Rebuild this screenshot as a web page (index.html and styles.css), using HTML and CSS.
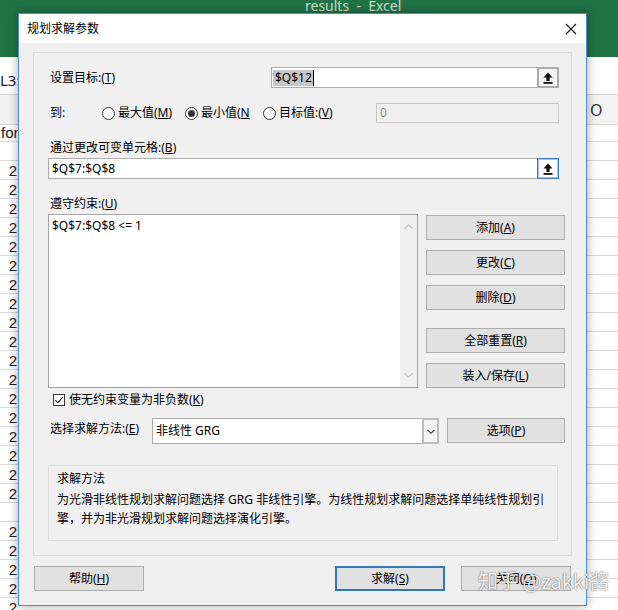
FILE: index.html
```html
<!DOCTYPE html>
<html lang="zh-CN">
<head>
<meta charset="utf-8">
<title>规划求解参数</title>
<link rel="stylesheet" href="styles.css">
</head>
<body>
<div class="excel">
  <div class="ribbon"><span class="app-title">results&nbsp; - &nbsp;Excel</span></div>
  <div class="fbar"><span class="namebox">L3:L12</span></div>
  <div class="colhdr"><span class="col-o">O</span></div>
  <div class="sheet">
    <div class="row r-first"><span class="cell cell-left">for</span></div>
    <div class="row"></div>
    <div class="row"><span class="cell">2</span></div>
    <div class="row"><span class="cell">2</span></div>
    <div class="row"><span class="cell">2</span></div>
    <div class="row"><span class="cell">2</span></div>
    <div class="row"><span class="cell">2</span></div>
    <div class="row"><span class="cell">2</span></div>
    <div class="row"><span class="cell">2</span></div>
    <div class="row"><span class="cell">2</span></div>
    <div class="row"><span class="cell">2</span></div>
    <div class="row"><span class="cell">2</span></div>
    <div class="row"><span class="cell">2</span></div>
    <div class="row"><span class="cell">2</span></div>
    <div class="row"><span class="cell">2</span></div>
    <div class="row"><span class="cell">2</span></div>
    <div class="row"><span class="cell">2</span></div>
    <div class="row"><span class="cell">2</span></div>
    <div class="row"><span class="cell">2</span></div>
    <div class="row"><span class="cell">2</span></div>
    <div class="row"></div>
    <div class="row"><span class="cell">2</span></div>
    <div class="row"><span class="cell">2</span></div>
    <div class="row"><span class="cell">2</span></div>
    <div class="row"><span class="cell">2</span></div>
    <div class="row"><span class="cell">2</span></div>
  </div>
</div>

<div class="dialog">
  <div class="titlebar">
    <span class="title">规划求解参数</span>
    <span class="close">
      <svg width="12" height="12" viewBox="0 0 12 12"><path d="M1 1 L11 11 M11 1 L1 11" stroke="#111" stroke-width="1.1" fill="none"/></svg>
    </span>
  </div>

  <div class="panel">
    <div class="row-target">
      <span class="lbl lbl-target">设置目标:(<u>T</u>)</span>
      <div class="refbox refbox-target">
        <span class="reftext reftext-target"><span class="sel">$Q$12</span><span class="caret"></span></span>
        <span class="refbtn refbtn-gray">
          <svg width="10" height="12" viewBox="0 0 10 12"><path d="M5 0.5 L9.5 5.5 H6.6 V9 H3.4 V5.5 H0.5 Z" fill="#111"/><rect x="0.5" y="10" width="9" height="1.8" fill="#111"/></svg>
        </span>
      </div>
    </div>

    <div class="row-to">
      <span class="lbl lbl-to">到:</span>
      <span class="radio r1"><span class="dot"></span>最大值(<u>M</u>)</span>
      <span class="radio r2 checked"><span class="dot"></span>最小值(<u>N</u></span>
      <span class="radio r3"><span class="dot"></span>目标值:(<u>V</u>)</span>
      <div class="valbox">0</div>
    </div>

    <div class="lbl lbl-block lbl-change">通过更改可变单元格:(<u>B</u>)</div>
    <div class="refbox refbox-wide">
      <span class="reftext">$Q$7:$Q$8</span>
      <span class="refbtn refbtn-blue">
        <svg width="10" height="12" viewBox="0 0 10 12"><path d="M5 0.5 L9.5 5.5 H6.6 V9 H3.4 V5.5 H0.5 Z" fill="#111"/><rect x="0.5" y="10" width="9" height="1.8" fill="#111"/></svg>
      </span>
    </div>

    <div class="lbl lbl-block lbl-cons">遵守约束:(<u>U</u>)</div>
    <div class="cons-row">
      <div class="listbox">
        <div class="list-items"><div class="item">$Q$7:$Q$8 &lt;= 1</div></div>
        <div class="vscroll">
          <svg width="9" height="5" viewBox="0 0 9 5"><path d="M0.5 4.5 L4.5 0.8 L8.5 4.5" stroke="#c4c4c4" stroke-width="1.2" fill="none"/></svg>
          <svg width="9" height="5" viewBox="0 0 9 5"><path d="M0.5 0.5 L4.5 4.2 L8.5 0.5" stroke="#c4c4c4" stroke-width="1.2" fill="none"/></svg>
        </div>
      </div>
      <div class="side-btns">
        <button class="btn sb sb-add">添加(<u>A</u>)</button>
        <button class="btn sb sb-mid">更改(<u>C</u>)</button>
        <button class="btn sb sb-mid">删除(<u>D</u>)</button>
        <button class="btn sb sb-reset">全部重置(<u>R</u>)</button>
        <button class="btn sb sb-mid">装入/保存(<u>L</u>)</button>
      </div>
    </div>

    <div class="check-row">
      <span class="checkbox">
        <svg width="12" height="12" viewBox="0 0 12 12"><rect x="0.5" y="0.5" width="11" height="11" fill="#fff" stroke="#333"/><path d="M2.3 6.2 L4.8 8.7 L9.8 3.2" stroke="#222" stroke-width="1.2" fill="none"/></svg>
      </span>
      <span>使无约束变量为非负数(<u>K</u>)</span>
    </div>

    <div class="method-row">
      <span class="lbl lbl-method">选择求解方法:(<u>E</u>)</span>
      <div class="combo">
        <span class="combo-text">非线性 GRG</span>
        <span class="combo-arrow">
          <svg width="8" height="5" viewBox="0 0 8 5"><path d="M0.5 0.8 L4 4.2 L7.5 0.8" stroke="#444" stroke-width="1.1" fill="none"/></svg>
        </span>
      </div>
      <button class="btn btn-opt">选项(<u>P</u>)</button>
    </div>

    <div class="desc">
      <div class="desc-title">求解方法</div>
      <div class="desc-text">为光滑非线性规划求解问题选择 GRG 非线性引擎。为线性规划求解问题选择单纯线性规划引<br>擎，并为非光滑规划求解问题选择演化引擎。</div>
    </div>
  </div>

  <div class="footer">
    <button class="btn fbtn">帮助(<u>H</u>)</button>
    <span class="spacer"></span>
    <button class="btn fbtn primary">求解(<u>S</u>)</button>
    <button class="btn fbtn">关闭(<u>O</u>)</button>
  </div>
</div>

<div class="watermark">知乎 @zakki酱</div>
</body>
</html>
```

FILE: styles.css
```css
html, body {
  margin: 0;
  padding: 0;
}
body {
  width: 618px;
  height: 610px;
  overflow: hidden;
  position: relative;
  background: #ffffff;
  font-family: "Noto Sans", "Noto Sans CJK SC", sans-serif;
}

/* ---------- Excel background ---------- */
.ribbon {
  height: 57px;
  background: #217346;
  overflow: hidden;
}
.app-title {
  display: block;
  padding-left: 305px;
  margin-top: -1px;
  color: #cfe2d6;
  font-size: 14px;
  line-height: 14px;
  white-space: nowrap;
}
.fbar {
  height: 37px;
  border-bottom: 1px solid #d4d4d4;
}
.namebox {
  display: block;
  padding-top: 15px;
  font-size: 15px;
  line-height: 16px;
  color: #222;
  white-space: nowrap;
}
.colhdr {
  height: 29px;
  background: #f3f3f3;
  border-bottom: 1px solid #d4d4d4;
}
.col-o {
  display: block;
  padding-left: 590px;
  padding-top: 5px;
  font-size: 16px;
  line-height: 20px;
  color: #333;
}
.row {
  height: 18px;
  border-bottom: 1px solid #dadada;
}
.r-first {
  height: 16px;
}
.cell {
  display: block;
  width: 17px;
  text-align: right;
  font-family: "Liberation Sans", sans-serif;
  font-size: 15px;
  line-height: 19px;
  color: #222;
}
.cell-left {
  text-align: left;
  padding-left: 1px;
  line-height: 15px;
}

/* ---------- Dialog ---------- */
.dialog {
  position: absolute;
  left: 18px;
  top: 13px;
  width: 569px;
  height: 593px;
  box-sizing: border-box;
  border: 1px solid #4f8cc8;
  background: #f0f0f0;
  box-shadow: 0 0 10px rgba(0, 0, 0, 0.35);
  font-size: 12px;
  color: #000;
}
.titlebar {
  height: 29px;
  background: #ffffff;
  display: flex;
  align-items: center;
  padding-left: 8px;
}
.title {
  line-height: 16px;
}
.close {
  margin-left: auto;
  width: 30px;
  height: 29px;
  display: flex;
  align-items: center;
  justify-content: center;
}

.panel {
  margin: 9px 14px 0 14px;
  border: 1px solid #dcdcdc;
  padding: 14px 6px 14px 14px;
}
.lbl {
  line-height: 16px;
  white-space: nowrap;
}
u {
  text-decoration: underline;
  text-underline-offset: 1px;
}

.row-target {
  display: flex;
  align-items: center;
  height: 21px;
}
.lbl-target {
  width: 223px;
  padding-left: 2px;
  box-sizing: border-box;
}
.refbox {
  box-sizing: border-box;
  height: 21px;
  border: 1px solid #acacac;
  background: #ffffff;
  display: flex;
  align-items: center;
}
.refbox-target {
  width: 288px;
}
.refbox-wide {
  width: 511px;
  margin-top: 2px;
}
.reftext {
  flex: 1;
  padding-left: 3px;
  line-height: 16px;
  white-space: nowrap;
}
.reftext-target {
  padding-left: 1px;
  display: flex;
  align-items: center;
}
.sel {
  background: #c6c6c6;
  padding: 0 1px 0 2px;
  line-height: 16px;
}
.caret {
  display: inline-block;
  width: 1px;
  height: 16px;
  background: #000;
}
.refbtn {
  box-sizing: border-box;
  width: 22px;
  height: 21px;
  margin: -1px -1px -1px 0;
  display: flex;
  align-items: center;
  justify-content: center;
}
.refbtn-gray {
  border: 2px solid #ababab;
  background: #f2f2f2;
}
.refbtn-blue {
  border: 1px solid #3d7fbf;
  box-shadow: inset 0 0 0 1px #9cc3e6;
  background: #ffffff;
}

.row-to {
  display: flex;
  align-items: center;
  height: 20px;
  margin-top: 15px;
}
.lbl-to {
  width: 54px;
  padding-left: 2px;
  box-sizing: border-box;
}
.radio {
  display: flex;
  align-items: center;
  line-height: 16px;
  white-space: nowrap;
}
.r1 { width: 83px; }
.r2 { width: 78px; }
.dot {
  box-sizing: border-box;
  width: 13px;
  height: 13px;
  border: 1px solid #333;
  border-radius: 50%;
  margin-right: 3px;
  background: #fff;
  display: flex;
  align-items: center;
  justify-content: center;
}
.checked .dot::after {
  content: "";
  width: 7px;
  height: 7px;
  border-radius: 50%;
  background: #333;
}
.valbox {
  margin-left: auto;
  margin-right: 6px;
  width: 183px;
  height: 20px;
  box-sizing: border-box;
  border: 1px solid #c8c8c8;
  background: #f0f0f0;
  color: #8c8c8c;
  padding-left: 3px;
  line-height: 18px;
}

.lbl-block {
  display: block;
  padding-left: 2px;
}
.lbl-change { margin-top: 17px; }
.lbl-cons { margin-top: 17px; }

.cons-row {
  display: flex;
  margin-top: 2px;
}
.listbox {
  box-sizing: border-box;
  width: 370px;
  height: 174px;
  border: 1px solid #a3a3a3;
  background: #ffffff;
  display: flex;
}
.list-items {
  flex: 1;
  padding: 3px 0 0 3px;
}
.item {
  line-height: 16px;
  white-space: nowrap;
}
.vscroll {
  width: 17px;
  background: #f0f0f0;
  display: flex;
  flex-direction: column;
  justify-content: space-between;
  align-items: center;
  padding: 9px 0 9px 0;
  box-sizing: border-box;
}
.vscroll svg { display: block; }

.side-btns {
  margin-left: 8px;
  width: 139px;
  display: flex;
  flex-direction: column;
}
.btn {
  box-sizing: border-box;
  height: 25px;
  border: 1px solid #adadad;
  background: #e1e1e1;
  font: inherit;
  font-size: 12px;
  color: #000;
  padding: 0;
  margin: 0;
  display: flex;
  align-items: center;
  justify-content: center;
  line-height: 16px;
  white-space: nowrap;
}
.sb { width: 139px; }
.sb-add { margin-top: 1px; }
.sb-mid { margin-top: 10px; }
.sb-reset { margin-top: 18px; }

.check-row {
  display: flex;
  align-items: center;
  height: 16px;
  margin-top: 4px;
  padding-left: 5px;
  line-height: 16px;
  white-space: nowrap;
}
.checkbox {
  width: 12px;
  height: 12px;
  margin-right: 4px;
  display: flex;
}
.checkbox svg { display: block; }

.method-row {
  display: flex;
  align-items: flex-start;
  margin-top: 10px;
  height: 26px;
}
.lbl-method {
  width: 104px;
  padding: 3px 0 0 2px;
  box-sizing: border-box;
}
.combo {
  box-sizing: border-box;
  width: 287px;
  height: 26px;
  border: 1px solid #acacac;
  background: #ffffff;
  display: flex;
}
.combo-text {
  flex: 1;
  padding-left: 3px;
  line-height: 24px;
  white-space: nowrap;
}
.combo-arrow {
  box-sizing: border-box;
  width: 17px;
  margin: -1px -1px -1px 0;
  border: 2px solid #bdbdbd;
  background: #f4f4f4;
  display: flex;
  align-items: center;
  justify-content: center;
}
.btn-opt {
  margin-left: 8px;
  width: 118px;
}

.desc {
  margin-top: 21px;
  box-sizing: border-box;
  width: 510px;
  height: 76px;
  border: 1px solid #dcdcdc;
  padding: 3px 8px 0 8px;
  line-height: 19px;
}
.desc-title {
  margin-bottom: 2px;
}
.desc-text {
  white-space: nowrap;
}

.footer {
  display: flex;
  margin-top: 10px;
  padding: 0 15px;
}
.fbtn { width: 110px; }
.spacer { flex: 1; }
.primary {
  border: 2px solid #3277b8;
  margin-right: 16px;
}

/* ---------- Watermark ---------- */
.watermark {
  position: absolute;
  left: 478px;
  top: 569px;
  font-family: "Noto Sans CJK SC", sans-serif;
  font-size: 20px;
  line-height: 24px;
  color: rgba(255, 255, 255, 0.93);
  text-shadow: 0 0 1px rgba(0, 0, 0, 0.5), 0 0 2px rgba(0, 0, 0, 0.35);
  white-space: nowrap;
}
```
